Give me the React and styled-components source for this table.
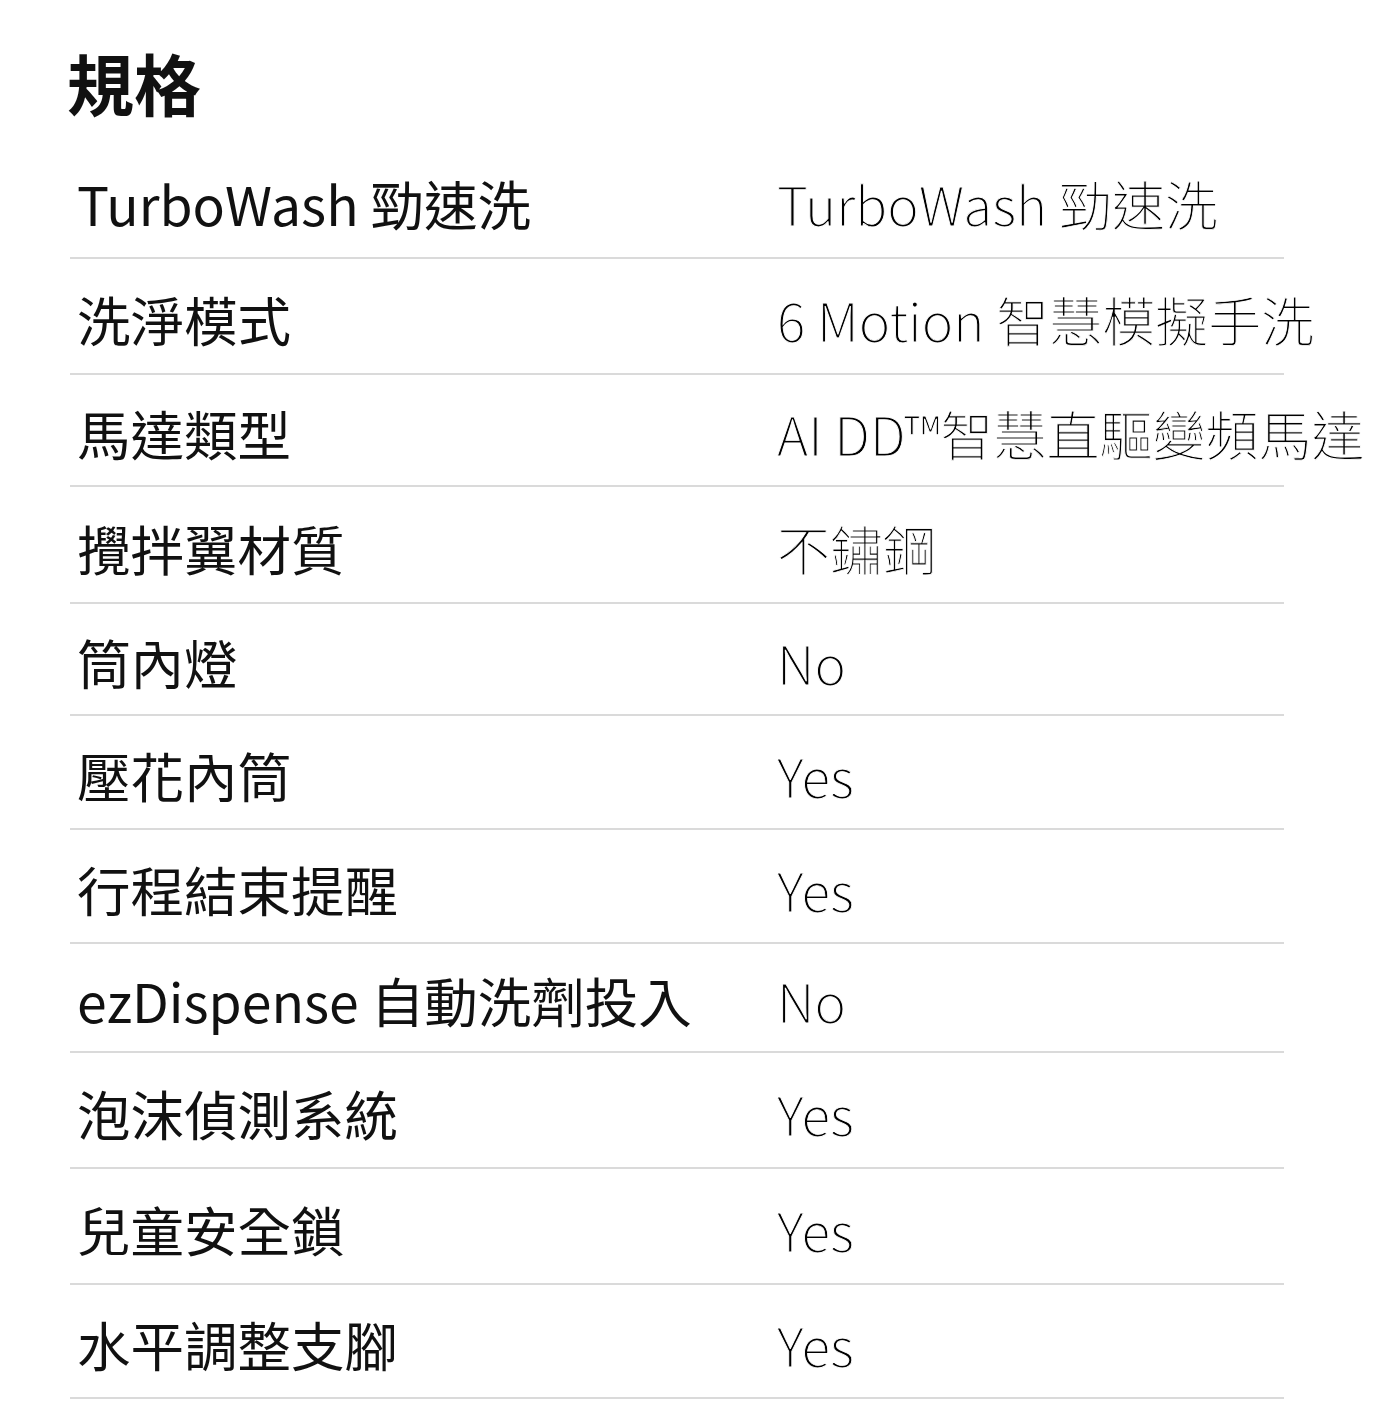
import React from "react";
import styled, { createGlobalStyle } from "styled-components";

const Global = createGlobalStyle`
  html, body { margin: 0; padding: 0; background: #fff; }
  body { font-family: "Noto Sans CJK TC", "Noto Sans", sans-serif; color: #111; }
`;

const Page = styled.div`
  padding: 34px 0 0 70px;
  width: 1214px;
`;

const Title = styled.h2`
  margin: 0 0 0 -3px;
  font-size: 67px;
  font-weight: 700;
  line-height: 96px;
  color: #111;
`;

const Table = styled.div`
  margin-top: 13px;
  display: grid;
  grid-template-columns: 700px minmax(0, 1fr);
`;

const Row = styled.div`
  display: contents;
`;

const Cell = styled.div`
  padding: ${(p) => p.$pt}px 0 ${(p) => p.$pb}px 7px;
  border-bottom: 2px solid #dadada;
  font-size: 53.5px;
  line-height: 76px;
  white-space: nowrap;
  overflow: visible;
  color: #111;
`;

const ValueCell = styled(Cell)`
  font-family: "Noto Sans CJK TC Light", "Noto Sans CJK TC DemiLight", "Noto Sans CJK TC", sans-serif;
  font-weight: 300;
  font-size: 53px;
  color: #000;
  -webkit-text-stroke: 0.9px #fff;
`;

const rows = [
  ["TurboWash 勁速洗", "TurboWash 勁速洗", 116],
  ["洗淨模式", "6 Motion 智慧模擬手洗", 116],
  ["馬達類型", "AI DD™智慧直驅變頻馬達", 112],
  ["攪拌翼材質", "不鏽鋼", 117],
  ["筒內燈", "No", 112],
  ["壓花內筒", "Yes", 114],
  ["行程結束提醒", "Yes", 114],
  ["ezDispense 自動洗劑投入", "No", 109],
  ["泡沫偵測系統", "Yes", 116],
  ["兒童安全鎖", "Yes", 116],
  ["水平調整支腳", "Yes", 114],
];

export default function App() {
  return (
    <>
      <Global />
      <Page>
        <Title>規格</Title>
        <Table>
          {rows.map(([k, v, h], i) => {
            const inner = h - 2 - 76;
            const pt = Math.round(inner * 0.58);
            const pb = inner - pt;
            return (
              <Row key={i}>
                <Cell $pt={pt} $pb={pb}>{k}</Cell>
                <ValueCell $pt={pt} $pb={pb}>{v}</ValueCell>
              </Row>
            );
          })}
        </Table>
      </Page>
    </>
  );
}
